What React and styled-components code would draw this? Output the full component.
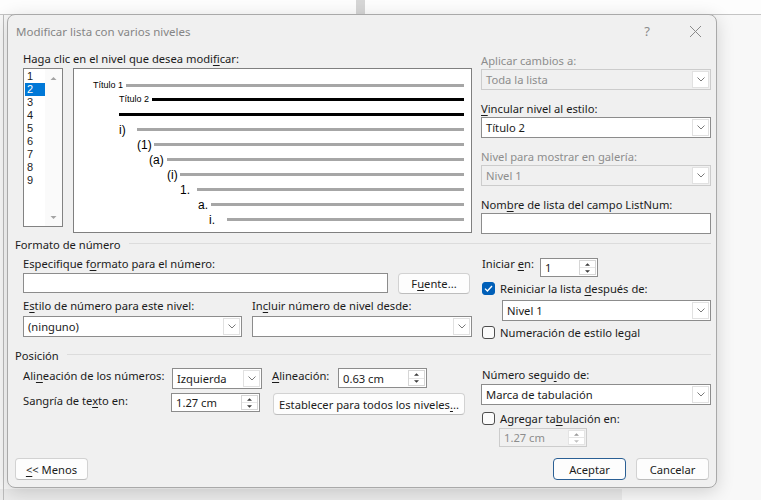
import React from 'react';
import styled, { createGlobalStyle } from 'styled-components';

const GlobalStyle = createGlobalStyle`
  html, body { margin: 0; padding: 0; }
  body {
    font-family: "Noto Sans", "Liberation Sans", sans-serif;
    font-size: 11.2px;
    color: #1b1b1b;
  }
  * { box-sizing: border-box; }
  u { text-underline-offset: 2px; }
`;

const Page = styled.div`
  width: 761px;
  height: 500px;
  overflow: hidden;
  padding: 14px 0 0 7px;
  background:
    linear-gradient(#d6d6d6, #d6d6d6) 356px 0 / 9px 14px no-repeat,
    linear-gradient(#c4c4c4, #c4c4c4) 0 14px / 100% 1px no-repeat,
    linear-gradient(#fdfdfd, #fdfdfd) 0 0 / 100% 14px no-repeat,
    linear-gradient(#bcbcbc, #bcbcbc) 3px 15px / 1px 100% no-repeat,
    linear-gradient(#ebebeb, #ebebeb) 0 489px / 622px 11px no-repeat,
    #f8f8f8;
`;

const Dialog = styled.div`
  width: 710px;
  height: 474px;
  background: #f0f0f0;
  border: 1px solid #a9a9a9;
  border-radius: 8px;
  box-shadow: 0 4px 18px rgba(0, 0, 0, 0.16);
  display: flex;
  flex-direction: column;
`;

const TitleBar = styled.div`
  height: 32px;
  display: flex;
  align-items: center;
  padding-left: 8px;
  padding-right: 6px;
`;

const Title = styled.div`
  flex: 1;
  font-size: 11.5px;
  color: #858585;
`;

const TitleButton = styled.div`
  width: 30px;
  height: 30px;
  display: flex;
  align-items: center;
  justify-content: center;
  color: #8a8a8a;
  font-size: 13px;
  margin-left: ${p => p.$gap || 0}px;
`;

const Body = styled.div`
  flex: 1;
  display: flex;
  flex-direction: column;
  padding: 0 5px 7px 7px;
`;

const Row = styled.div`
  display: flex;
  gap: 9px;
`;

const LeftCol = styled.div`
  width: 457px;
  padding-left: 8px;
  padding-top: ${p => p.$top || 0}px;
`;

const RightCol = styled.div`
  width: 230px;
  padding-left: ${p => p.$inset || 0}px;
  padding-top: ${p => p.$top || 0}px;
`;

const Label = styled.div`
  height: 16px;
  line-height: 16px;
  white-space: nowrap;
  color: ${p => (p.$disabled ? '#8d8d8d' : '#1b1b1b')};
  width: ${p => (p.$w ? `${p.$w}px` : 'auto')};
  flex-shrink: 0;
  margin-top: ${p => p.$top || 0}px;
  margin-left: ${p => p.$left || 0}px;
`;

const FieldGroup = styled.div`
  margin-bottom: 11px;
  &:last-child { margin-bottom: 0; }
`;

/* ---------- level list + preview ---------- */

const PickRow = styled.div`
  display: flex;
  gap: 10px;
  margin-top: 1px;
`;

const LevelList = styled.div`
  width: 40px;
  height: 159px;
  border: 1px solid #828282;
  background: #fff;
  display: flex;
`;

const LevelItems = styled.div`
  width: 21px;
  padding-top: 1px;
`;

const LevelItem = styled.div`
  width: 20px;
  height: 13px;
  line-height: 13px;
  margin-left: 1px;
  padding-left: 2px;
  font-family: "Liberation Sans", Arial, sans-serif;
  font-size: 11px;
  background: ${p => (p.$selected ? '#0078d7' : 'transparent')};
  color: ${p => (p.$selected ? '#fff' : '#1b1b1b')};
`;

const ScrollTrack = styled.div`
  flex: 1;
  display: flex;
  flex-direction: column;
  justify-content: space-between;
  align-items: center;
  padding: 8px 0 7px;
  background: #fafafa;
`;

const Preview = styled.div`
  width: 399px;
  height: 165px;
  border: 1px solid #7f7f7f;
  background: #fff;
  padding: 9px 7px 0 0;
  font-family: "Liberation Sans", Arial, sans-serif;
  color: #000;
`;

const PreviewRow = styled.div`
  display: flex;
  align-items: center;
  height: ${p => p.$h}px;
  padding-left: ${p => p.$indent - 1}px;
`;

const PreviewNum = styled.span`
  width: ${p => p.$w}px;
  flex-shrink: 0;
  font-size: ${p => (p.$small ? 9 : 12)}px;
  white-space: nowrap;
`;

const PreviewLine = styled.div`
  flex: 1;
  height: 3px;
  background: ${p => (p.$dark ? '#000' : '#a6a6a6')};
`;

/* ---------- controls ---------- */

const Combo = styled.div`
  display: flex;
  height: ${p => p.$h || 21}px;
  width: ${p => (p.$w ? `${p.$w}px` : 'auto')};
  flex-shrink: 0;
  margin-top: ${p => p.$top || 0}px;
  margin-left: ${p => p.$left || 0}px;
  border: 1px solid ${p => (p.$disabled ? '#cccccc' : '#8c8c8c')};
  background: ${p => (p.$disabled ? '#f0f0f0' : '#fff')};
  color: ${p => (p.$disabled ? '#8d8d8d' : '#1b1b1b')};
`;

const ComboText = styled.div`
  flex: 1;
  padding-left: 4px;
  display: flex;
  align-items: center;
  white-space: nowrap;
  overflow: hidden;
`;

const ComboArrow = styled.div`
  width: 17px;
  margin: 1px;
  border: 1px solid #e1e1e1;
  background: #fff;
  display: flex;
  align-items: center;
  justify-content: center;
`;

const SpinButtons = styled.div`
  width: 17px;
  margin: 1px;
  border: 1px solid ${p => (p.$disabled ? '#e4e4e4' : '#d6d6d6')};
  background: #fff;
  display: flex;
  flex-direction: column;
  & > div {
    flex: 1;
    display: flex;
    align-items: center;
    justify-content: center;
  }
  & > div + div { border-top: 1px solid #e6e6e6; }
`;

const TextInput = styled.div`
  height: ${p => p.$h || 20}px;
  width: ${p => (p.$w ? `${p.$w}px` : 'auto')};
  border: 1px solid #8c8c8c;
  background: #fff;
`;

const Button = styled.div`
  width: ${p => p.$w}px;
  height: ${p => p.$h || 22}px;
  flex-shrink: 0;
  margin-left: ${p => p.$left || 0}px;
  display: flex;
  align-items: center;
  justify-content: center;
  background: #fdfdfd;
  border: 1px solid ${p => (p.$primary ? '#2a5f94' : '#d2d2d2')};
  border-bottom-color: ${p => (p.$primary ? '#2a5f94' : '#bdbdbd')};
  border-radius: 4px;
  white-space: nowrap;
`;

const CheckRow = styled.div`
  display: flex;
  align-items: center;
  gap: 5px;
  height: 16px;
  margin-top: ${p => p.$top || 0}px;
`;

const Box = styled.div`
  width: 13px;
  height: 13px;
  border-radius: 3px;
  flex-shrink: 0;
  display: flex;
  align-items: center;
  justify-content: center;
  background: ${p => (p.$checked ? '#005fb8' : '#fbfbfb')};
  border: 1px solid ${p => (p.$checked ? '#005fb8' : '#4d4d4d')};
`;

const Inline = styled.div`
  display: flex;
  align-items: flex-start;
  gap: ${p => p.$gap || 0}px;
  margin-top: ${p => p.$top || 0}px;
`;

const SectionHead = styled.div`
  display: flex;
  align-items: center;
  height: 16px;
  margin-top: ${p => p.$top || 0}px;
  &::after {
    content: '';
    flex: 1;
    height: 1px;
    margin-left: 8px;
    margin-top: -1px;
    background: #dcdcdc;
  }
`;

const Footer = styled.div`
  margin-top: auto;
  display: flex;
  justify-content: space-between;
  padding-right: 2px;
`;

const ButtonGroup = styled.div`
  display: flex;
  gap: 10px;
`;

/* ---------- small drawings ---------- */

const Chevron = () => (
  <svg width="8" height="5" viewBox="0 0 8 5">
    <path d="M0.5 0.5 L4 4 L7.5 0.5" fill="none" stroke="#7a7a7a" strokeWidth="1" />
  </svg>
);

const Tri = ({ up, color = '#3a3a3a', w = 5 }) => (
  <svg width={w} height="3" viewBox="0 0 6 3">
    <path d={up ? 'M0 3 L3 0 L6 3 Z' : 'M0 0 L6 0 L3 3 Z'} fill={color} />
  </svg>
);

const Tick = () => (
  <svg width="9" height="7" viewBox="0 0 9 7">
    <path d="M1 3.6 L3.4 6 L8 1" fill="none" stroke="#fff" strokeWidth="1.3" />
  </svg>
);

const Select = ({ value, disabled, w, h, top, left }) => (
  <Combo $disabled={disabled} $w={w} $h={h} $top={top} $left={left}>
    <ComboText>{value}</ComboText>
    <ComboArrow><Chevron /></ComboArrow>
  </Combo>
);

const Spinner = ({ value, disabled, w, h = 19, top, left }) => (
  <Combo $disabled={disabled} $w={w} $h={h} $top={top} $left={left}>
    <ComboText>{value}</ComboText>
    <SpinButtons $disabled={disabled}>
      <div><Tri up color={disabled ? '#9a9a9a' : '#3a3a3a'} /></div>
      <div><Tri color={disabled ? '#c0c0c0' : '#3a3a3a'} /></div>
    </SpinButtons>
  </Combo>
);

const Check = ({ checked, children, top }) => (
  <CheckRow $top={top}>
    <Box $checked={checked}>{checked && <Tick />}</Box>
    <span>{children}</span>
  </CheckRow>
);

const previewRows = [
  { text: 'Título 1', small: true, indent: 20, tab: 53, h: 14 },
  { text: 'Título 2', small: true, indent: 46, tab: 79, h: 14, dark: true },
  { text: '', indent: 46, tab: 46, h: 16, dark: true },
  { text: 'i)', indent: 46, tab: 64, h: 15 },
  { text: '(1)', indent: 64, tab: 81, h: 15 },
  { text: '(a)', indent: 76, tab: 94, h: 15 },
  { text: '(i)', indent: 94, tab: 107, h: 15 },
  { text: '1.', indent: 107, tab: 124, h: 15 },
  { text: 'a.', indent: 125, tab: 138, h: 15 },
  { text: 'i.', indent: 136, tab: 154, h: 15 },
];

export default function App() {
  return (
    <Page>
      <GlobalStyle />
      <Dialog>
        <TitleBar>
          <Title>Modificar lista con varios niveles</Title>
          <TitleButton>?</TitleButton>
          <TitleButton $gap={18}>
            <svg width="13" height="13" viewBox="0 0 13 13">
              <path d="M1 1 L12 12 M12 1 L1 12" stroke="#8a8a8a" strokeWidth="1" />
            </svg>
          </TitleButton>
        </TitleBar>

        <Body>
          <Row>
            <LeftCol $top={4}>
              <Label>Haga clic en el nivel que desea modi<u>f</u>icar:</Label>
              <PickRow>
                <LevelList>
                  <LevelItems>
                    {[1, 2, 3, 4, 5, 6, 7, 8, 9].map(n => (
                      <LevelItem key={n} $selected={n === 2}>{n}</LevelItem>
                    ))}
                  </LevelItems>
                  <ScrollTrack>
                    <Tri up color="#a3a3a3" w={7} />
                    <Tri color="#a3a3a3" w={7} />
                  </ScrollTrack>
                </LevelList>
                <Preview>
                  {previewRows.map((r, i) => (
                    <PreviewRow key={i} $h={r.h} $indent={r.indent}>
                      <PreviewNum $w={r.tab - r.indent} $small={r.small}>{r.text}</PreviewNum>
                      <PreviewLine $dark={r.dark} />
                    </PreviewRow>
                  ))}
                </Preview>
              </PickRow>
            </LeftCol>

            <RightCol $top={6}>
              <FieldGroup>
                <Label $disabled>Aplicar cambios a:</Label>
                <Select value="Toda la lista" disabled />
              </FieldGroup>
              <FieldGroup>
                <Label><u>V</u>incular nivel al estilo:</Label>
                <Select value="Título 2" />
              </FieldGroup>
              <FieldGroup>
                <Label $disabled>Nivel para mostrar en galería:</Label>
                <Select value="Nivel 1" disabled />
              </FieldGroup>
              <FieldGroup>
                <Label>Nom<u>b</u>re de lista del campo ListNum:</Label>
                <TextInput $h={21} />
              </FieldGroup>
            </RightCol>
          </Row>

          <SectionHead $top={2}>Formato de número</SectionHead>
          <Row>
            <LeftCol>
              <Label $top={4}>Especifique f<u>o</u>rmato para el número:</Label>
              <Inline $gap={10} $top={1}>
                <TextInput $w={365} />
                <Button $w={72} $h={21}>F<u>u</u>ente...</Button>
              </Inline>
              <Inline $gap={10} $top={4}>
                <div>
                  <Label>E<u>s</u>tilo de número para este nivel:</Label>
                  <Select value="(ninguno)" w={219} top={2} />
                </div>
                <div>
                  <Label>In<u>c</u>luir número de nivel desde:</Label>
                  <Select value="" w={220} top={2} />
                </div>
              </Inline>
            </LeftCol>
            <RightCol $inset={1}>
              <Inline $top={4}>
                <Label $w={58}>Iniciar <u>e</u>n:</Label>
                <Spinner value="1" w={58} top={2} />
              </Inline>
              <Check checked top={3}>Reiniciar la lista <u>d</u>espués de:</Check>
              <Select value="Nivel 1" left={20} top={4} />
              <Check top={3}>Numeración de estilo le<u>g</u>al</Check>
            </RightCol>
          </Row>

          <SectionHead $top={7}>Posición</SectionHead>
          <Row>
            <LeftCol>
              <Inline $top={5}>
                <Label $w={149}>Ali<u>n</u>eación de los números:</Label>
                <Select value="Izquierda" w={90} />
                <Label $w={66} $left={10}><u>A</u>lineación:</Label>
                <Spinner value="0.63 cm" w={89} h={20} />
              </Inline>
              <Inline $top={4}>
                <Label $w={148}>Sangría de te<u>x</u>to en:</Label>
                <Spinner value="1.27 cm" w={89} />
                <Button $w={192} $left={13}>Establecer para todos los niveles<u>.</u>..</Button>
              </Inline>
            </LeftCol>
            <RightCol $inset={1}>
              <Label $top={4}>Número segu<u>i</u>do de:</Label>
              <Select value="Marca de tabulación" top={1} left={-1} />
              <Check top={5}>Agregar ta<u>b</u>ulación en:</Check>
              <Spinner value="1.27 cm" disabled w={88} left={17} top={2} />
            </RightCol>
          </Row>

          <Footer>
            <Button $w={73}><u>&lt;</u>&lt; Menos</Button>
            <ButtonGroup>
              <Button $w={73} $primary>Aceptar</Button>
              <Button $w={73}>Cancelar</Button>
            </ButtonGroup>
          </Footer>
        </Body>
      </Dialog>
    </Page>
  );
}
